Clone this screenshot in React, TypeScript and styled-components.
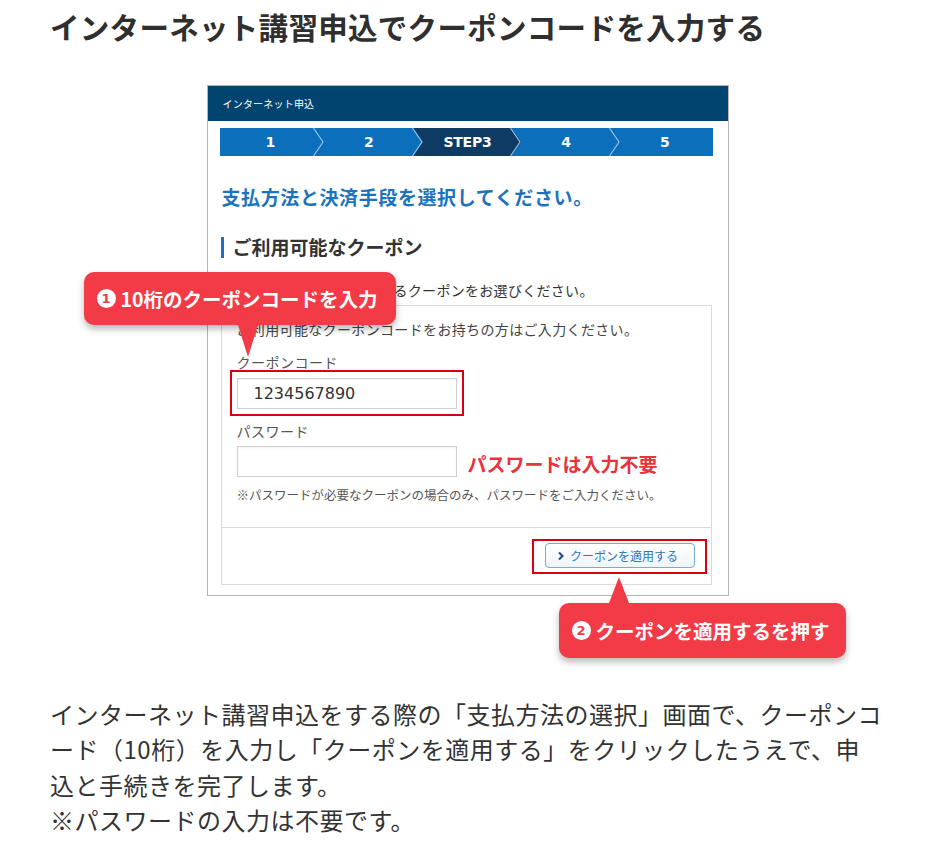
import React from 'react';
import styled, { createGlobalStyle } from 'styled-components';

const GlobalStyle = createGlobalStyle`
  html, body {
    margin: 0;
    padding: 0;
    background: #ffffff;
  }
  body {
    font-family: "Noto Sans CJK JP", "Noto Sans", sans-serif;
    color: #333333;
  }
  * {
    box-sizing: border-box;
  }
`;

const Page = styled.div`
  width: 930px;
  padding: 8px 45px 30px 50px;
`;

const Title = styled.h2`
  margin: 0;
  font-size: 29.5px;
  line-height: 36px;
  font-weight: 700;
  color: #2f2f2f;
  letter-spacing: 0.3px;
`;

const Shot = styled.div`
  position: relative;
  width: 522px;
  margin: 41px auto 0;
  border: 1px solid #b5b5b5;
  background: #ffffff;
`;

const ShotHeader = styled.div`
  height: 35px;
  background: #00446f;
  color: #ffffff;
  font-size: 10px;
  display: flex;
  align-items: center;
  padding-left: 15px;
  letter-spacing: 0.2px;
`;

const ShotBody = styled.div`
  padding: 7px 16px 10px 13px;
`;

const StepBar = styled.div`
  display: flex;
  height: 28px;
  margin: 0 -1px;
  background: #0b6fbb;
`;

const Step = styled.div<{ $active?: boolean }>`
  position: relative;
  flex: 1;
  display: flex;
  align-items: center;
  justify-content: center;
  color: #ffffff;
  font-family: "DejaVu Sans", Verdana, sans-serif;
  font-weight: 700;
  font-size: 14px;

  ${(p) =>
    p.$active &&
    `
    &::before {
      content: '';
      position: absolute;
      top: 0;
      bottom: 0;
      left: -4px;
      right: -6px;
      background: #0d3b64;
      clip-path: polygon(0 0, calc(100% - 10px) 0, 100% 50%, calc(100% - 10px) 100%, 0 100%, 10px 50%);
    }
  `}
`;

const StepLabel = styled.span`
  position: relative;
  z-index: 1;
  letter-spacing: -0.2px;
  padding-left: 3px;
`;

const Separator = styled.svg`
  position: absolute;
  top: 0;
  right: -6px;
  width: 11px;
  height: 28px;
  z-index: 2;
`;

const PageHeading = styled.div`
  margin-top: 29px;
  padding-left: 1px;
  font-size: 19px;
  line-height: 24px;
  font-weight: 700;
  color: #1b73bd;
  letter-spacing: 0.6px;
`;

const SectionHeading = styled.div`
  margin-top: 26px;
  display: flex;
  align-items: center;
  gap: 9px;
  font-size: 19px;
  line-height: 24px;
  font-weight: 700;
  color: #333333;

  &::before {
    content: '';
    width: 3px;
    height: 21px;
    background: #1e6fba;
  }
`;

const Lead = styled.div`
  margin-top: 21px;
  padding-left: 16px;
  font-size: 14px;
  line-height: 20px;
  letter-spacing: 0.3px;
  color: #333333;
`;

const CouponPanel = styled.div`
  margin-top: 5px;
  border: 1px solid #dadada;
`;

const PanelTop = styled.div`
  padding: 13px 15px 23px;
`;

const PanelText = styled.div`
  font-size: 14px;
  line-height: 20px;
  letter-spacing: 0.35px;
  color: #444444;
`;

const FieldLabel = styled.div<{ $gap: number }>`
  margin-top: ${(p) => p.$gap}px;
  font-size: 14px;
  line-height: 15px;
  letter-spacing: 0.5px;
  color: #555555;
`;

const Highlight = styled.div`
  display: inline-block;
  margin-left: -7px;
  border: 2px solid #d7000f;
  padding: 6px 5px 5px 5px;
`;

const Field = styled.div`
  width: 220px;
  height: 31px;
  border: 1px solid #cfcfcf;
  background: #ffffff;
  display: flex;
  align-items: center;
  padding-left: 16px;
  font-family: "DejaVu Sans", Verdana, sans-serif;
  font-size: 16px;
  color: #333333;
  box-shadow: inset 0 1px 2px rgba(0, 0, 0, 0.05);
`;

const FieldRow = styled.div`
  margin-top: 7px;
  display: flex;
  align-items: center;
  gap: 11px;
`;

const Warning = styled.span`
  font-size: 19px;
  font-weight: 700;
  color: #e8323c;
  margin-top: 4px;
`;

const Note = styled.div`
  margin-top: 9px;
  font-size: 12.5px;
  line-height: 18px;
  color: #555555;
`;

const PanelFoot = styled.div`
  border-top: 1px solid #dadada;
  padding: 11px 4px 10px 0;
  display: flex;
  justify-content: flex-end;
`;

const ButtonFrame = styled.div`
  border: 2px solid #d7000f;
  padding: 2px 10px 4px 11px;
`;

const ApplyButton = styled.div`
  width: 150px;
  height: 25px;
  border: 1px solid #75acd8;
  border-radius: 4px;
  background: linear-gradient(#ffffff, #eef5fb);
  display: flex;
  align-items: center;
  justify-content: center;
  gap: 5px;
  font-size: 12px;
  color: #2a78b8;
  padding-right: 4px;
`;

const Callout = styled.div<{ $left: number; $top: number; $width: number; $height: number }>`
  position: absolute;
  left: ${(p) => p.$left}px;
  top: ${(p) => p.$top}px;
  width: ${(p) => p.$width}px;
  height: ${(p) => p.$height}px;
  background: #f23b46;
  border-radius: 10px;
  box-shadow: 0 4px 7px rgba(0, 0, 0, 0.28);
  color: #ffffff;
  font-size: 19.5px;
  font-weight: 700;
  display: flex;
  align-items: center;
  gap: 5px;
  padding-left: 13px;
  z-index: 5;
  white-space: nowrap;
`;

const PointerDown = styled.span<{ $left: number }>`
  position: absolute;
  left: ${(p) => p.$left}px;
  top: 100%;
  width: 0;
  height: 0;
  border-left: 10px solid transparent;
  border-right: 10px solid transparent;
  border-top: 32px solid #f23b46;
`;

const PointerUp = styled.span<{ $left: number }>`
  position: absolute;
  left: ${(p) => p.$left}px;
  bottom: 100%;
  width: 0;
  height: 0;
  border-left: 10px solid transparent;
  border-right: 10px solid transparent;
  border-bottom: 26px solid #f23b46;
`;

const Badge = styled.span`
  display: inline-flex;
  align-items: center;
  justify-content: center;
  width: 19px;
  height: 19px;
  border-radius: 50%;
  background: #ffffff;
  color: #f23b46;
  font-family: "DejaVu Sans", sans-serif;
  font-size: 13px;
  font-weight: 700;
  line-height: 1;
`;

const Body = styled.p`
  margin: 100px 0 0;
  font-size: 24px;
  line-height: 35.3px;
  letter-spacing: 0.5px;
  color: #333333;
`;

const steps = ['1', '2', 'STEP3', '4', '5'];

export default function App() {
  return (
    <>
      <GlobalStyle />
      <Page>
        <Title>インターネット講習申込でクーポンコードを入力する</Title>

        <Shot>
          <ShotHeader>インターネット申込</ShotHeader>
          <ShotBody>
            <StepBar>
              {steps.map((s, i) => (
                <Step key={s} $active={i === 2}>
                  <StepLabel>{s}</StepLabel>
                  {i < steps.length - 1 && (
                    <Separator viewBox="0 0 11 28">
                      <polyline points="0.5,0 10,14 0.5,28" fill="none" stroke="#9cc8ec" strokeWidth="1.1" />
                    </Separator>
                  )}
                </Step>
              ))}
            </StepBar>

            <PageHeading>支払方法と決済手段を選択してください。</PageHeading>
            <SectionHeading>ご利用可能なクーポン</SectionHeading>
            <Lead>下記よりご利用いただけるクーポンをお選びください。</Lead>

            <CouponPanel>
              <PanelTop>
                <PanelText>ご利用可能なクーポンコードをお持ちの方はご入力ください。</PanelText>
                <FieldLabel $gap={16}>クーポンコード</FieldLabel>
                <Highlight>
                  <Field>1234567890</Field>
                </Highlight>
                <FieldLabel $gap={8}>パスワード</FieldLabel>
                <FieldRow>
                  <Field />
                  <Warning>パスワードは入力不要</Warning>
                </FieldRow>
                <Note>※パスワードが必要なクーポンの場合のみ、パスワードをご入力ください。</Note>
              </PanelTop>
              <PanelFoot>
                <ButtonFrame>
                  <ApplyButton>
                    <svg width="8" height="10" viewBox="0 0 8 10">
                      <polyline points="2,1.5 5.5,5 2,8.5" fill="none" stroke="#1d4f80" strokeWidth="2" />
                    </svg>
                    クーポンを適用する
                  </ApplyButton>
                </ButtonFrame>
              </PanelFoot>
            </CouponPanel>
          </ShotBody>

          <Callout $left={-124} $top={186} $width={312} $height={53}>
            <Badge>1</Badge>
            10桁のクーポンコードを入力
            <PointerDown $left={154} />
          </Callout>

          <Callout $left={351} $top={517} $width={287} $height={55}>
            <Badge>2</Badge>
            クーポンを適用するを押す
            <PointerUp $left={50} />
          </Callout>
        </Shot>

        <Body>
          インターネット講習申込をする際の「支払方法の選択」画面で、クーポンコード（10桁）を入力し「クーポンを適用する」をクリックしたうえで、申
          <br />
          込と手続きを完了します。
          <br />
          ※パスワードの入力は不要です。
        </Body>
      </Page>
    </>
  );
}
